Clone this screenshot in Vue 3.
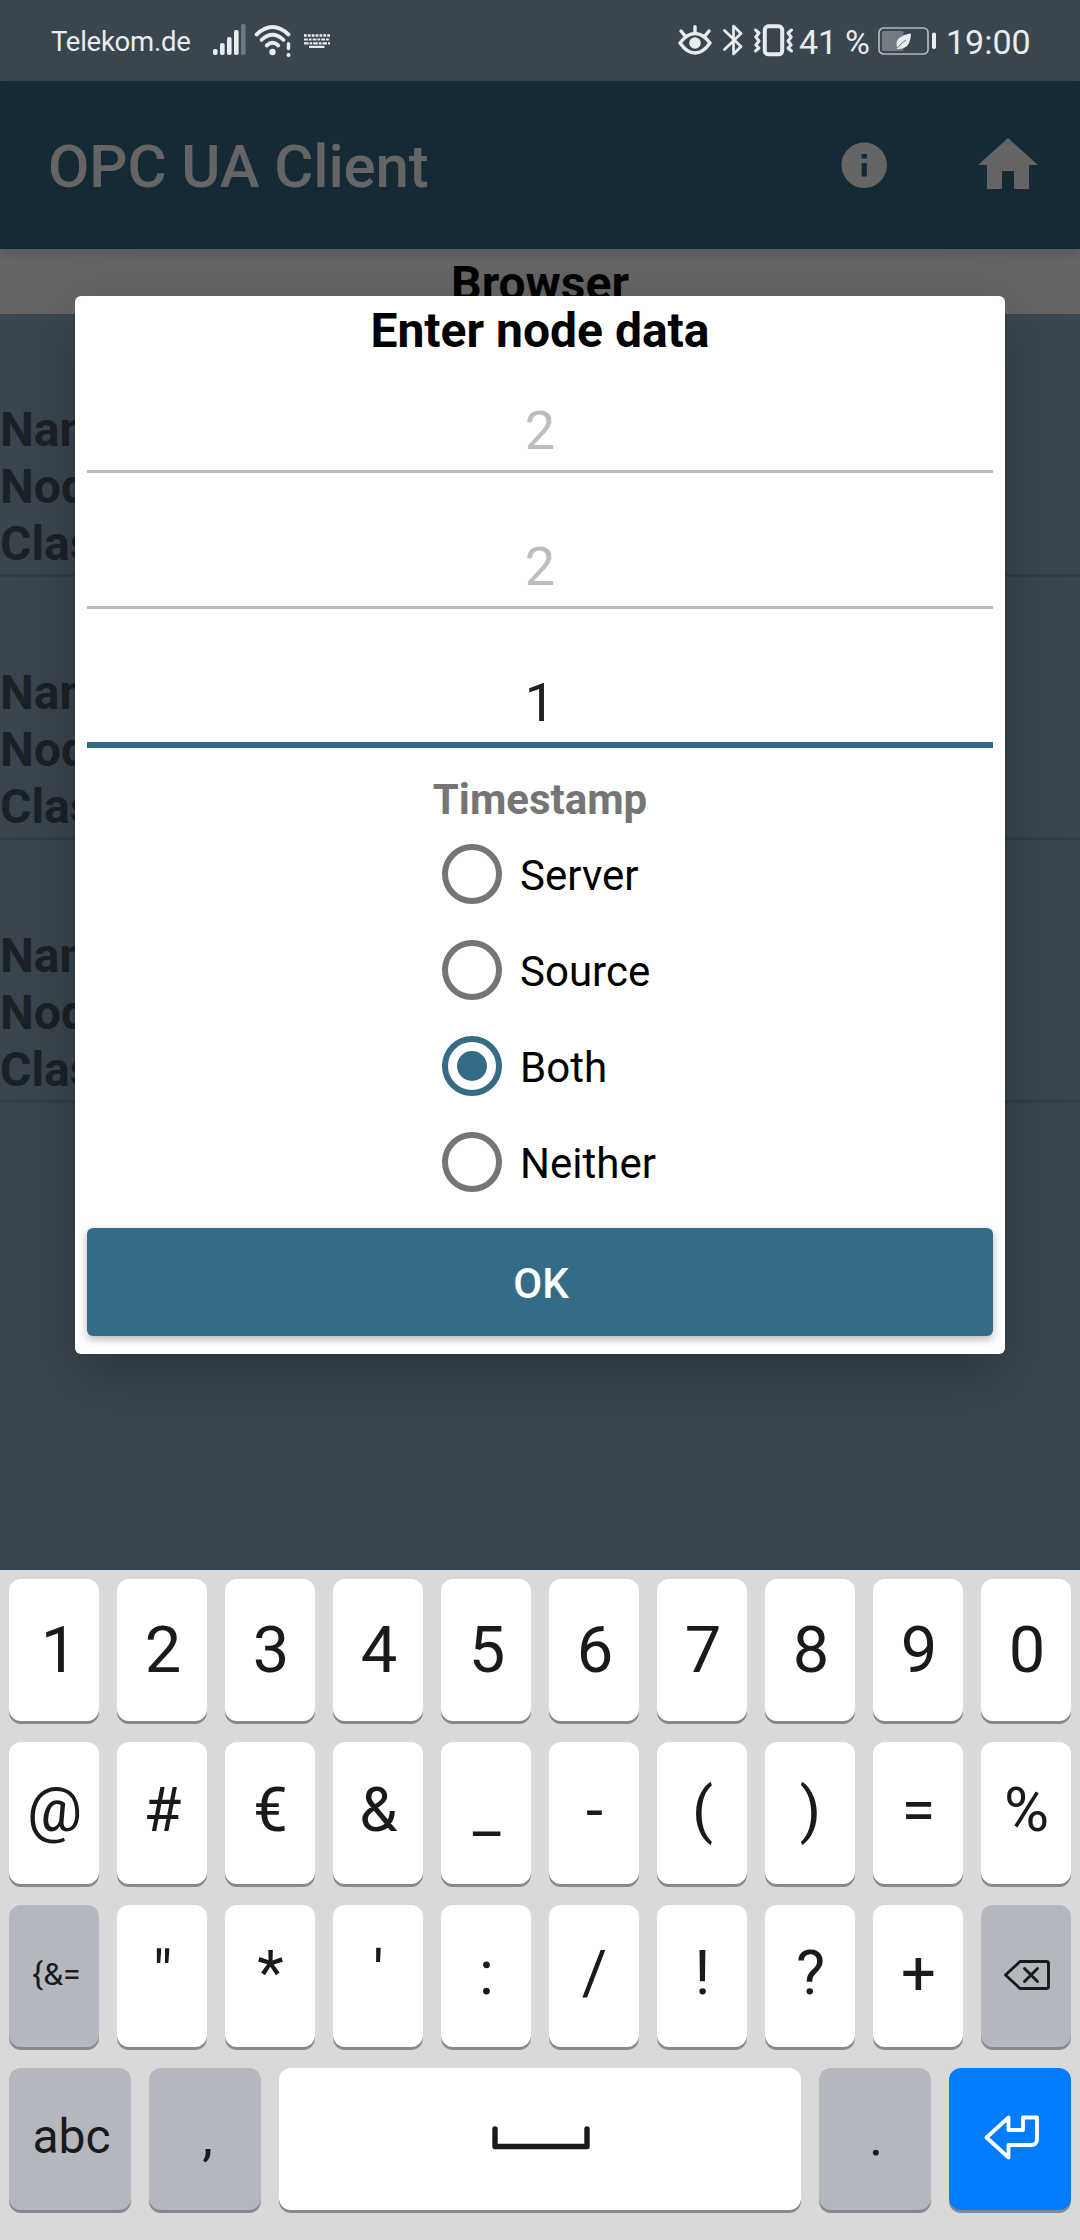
<script setup>
import { ref } from 'vue'

const items = [1, 2, 3]
const fields = [
  { value: '2', state: 'hint' },
  { value: '2', state: 'hint' },
  { value: '1', state: 'focused' },
]
const options = ['Server', 'Source', 'Both', 'Neither']
const selected = ref('Both')
const signal = [6, 12, 18, 25, 31]

const digits = '1234567890'.split('')
const symbols = '@#€&_-()=%'.split('')
const marks = ['"', '*', "'", ':', '/', '!', '?', '+']
</script>

<template>
  <div class="screen">
    <header class="status">
      <span class="carrier">Telekom.de</span>
      <svg class="signal" width="34" height="32" viewBox="0 0 34 32">
        <rect
          v-for="(h, i) in signal"
          :key="i"
          :x="i * 7"
          :y="31 - h"
          width="4.6"
          :height="h"
          rx="1.8"
          fill="#e9ebec"
          :opacity="i === 4 ? 0.3 : 1"
        />
      </svg>
      <svg class="wifi" width="38" height="34" viewBox="0 0 38 34" fill="none" stroke="#e9ebec" stroke-width="3.8" stroke-linecap="round">
        <path d="M2.5 10.5Q18.5 -4.5 34.5 10.5" />
        <path d="M7.5 16Q18.5 5.5 29.5 16" />
        <path d="M12.7 21.5Q18.5 16 24.3 21.5" />
        <circle cx="18.5" cy="28" r="3.2" fill="#e9ebec" stroke="none" />
        <path d="M34.5 19.7V24.5" stroke-width="3.4" />
        <circle cx="34.5" cy="31" r="2" fill="#e9ebec" stroke="none" />
      </svg>
      <svg class="keys-icon" width="26" height="14" viewBox="0 0 26 14" stroke="#e9ebec" fill="none">
        <path d="M0 1.5H26" stroke-width="2.6" stroke-dasharray="2.8 1.07" />
        <path d="M0 5.5H26" stroke-width="2.2" stroke-dasharray="3.9 0.9 2.8 1" />
        <path d="M0 9.3H26" stroke-width="2.2" stroke-dasharray="4.6 1 2.6 1" />
        <path d="M5 12.9H20.5" stroke-width="2.2" />
      </svg>

      <svg class="eye" width="34" height="31" viewBox="0 0 34 31" fill="none" stroke="#e9ebec" stroke-width="3.4" stroke-linecap="round" stroke-linejoin="round">
        <path d="M2 18Q9 8.5 17 8.5T32 18Q25 28 17 28T2 18Z" />
        <circle cx="17" cy="18" r="5.8" fill="#e9ebec" stroke="none" />
        <path d="M17 1.8V8M3 6L7 11M31 6L27 11" />
      </svg>
      <svg class="bluetooth" width="20" height="32" viewBox="0 0 20 32" fill="none" stroke="#e9ebec" stroke-width="2.7" stroke-linejoin="round" stroke-linecap="round">
        <path d="M1.5 6.5L18 22.5L10.5 30V2L18 9.5L1.5 25.5" />
      </svg>
      <svg class="vibrate" width="41" height="33" viewBox="0 0 41 33" fill="none" stroke="#e9ebec" stroke-linejoin="round" stroke-linecap="round">
        <rect x="11.8" y="2.3" width="17.4" height="28" rx="3.5" stroke-width="4" />
        <path d="M2.5 6L6 9L2.8 13L6 17L2.8 21L6 24L2.5 27" stroke-width="3" />
        <path d="M38.5 6L35 9L38.2 13L35 17L38.2 21L35 24L38.5 27" stroke-width="3" />
      </svg>
      <span class="percent">41 %</span>
      <svg class="battery" width="59" height="28" viewBox="0 0 59 28">
        <rect x="1" y="1" width="49" height="26" rx="4.5" fill="none" stroke="#b4b9bd" stroke-width="1.7" />
        <rect x="4" y="4" width="21.5" height="20" rx="1.5" fill="#747b82" />
        <path d="M33 6.5C25 8 18.5 10.5 18.5 17Q18.5 19 19.5 20.5L18.5 22H20.5C29 22 32.5 17 33 6.5Z" fill="#e9ebec" />
        <path d="M19.5 21Q23 16 28 13" fill="none" stroke="#747b82" stroke-width="1" />
        <rect x="54" y="5.5" width="4" height="16.5" rx="1.8" fill="#e9ebec" />
      </svg>
      <span class="clock">19:00</span>
    </header>

    <nav class="appbar">
      <h1>OPC UA Client</h1>
      <svg class="info" width="54.5" height="54.5" viewBox="0 0 24 24" fill="#656565">
        <path d="M12 2C6.48 2 2 6.48 2 12s4.48 10 10 10 10-4.48 10-10S17.52 2 12 2zm1.15 15h-2.3v-6h2.3v6zm0-8h-2.3V7h2.3v2z" />
      </svg>
      <svg class="home" width="72" height="72" viewBox="0 0 24 24" fill="#656565">
        <path d="M10 20v-6h4v6h5v-8h3L12 3 2 12h3v8z" />
      </svg>
    </nav>

    <h2 class="section">Browser</h2>

    <ul class="list">
      <li v-for="n in items" :key="n">
        <div>Name</div>
        <div>Node</div>
        <div>Class</div>
      </li>
    </ul>

    <section class="keyboard">
      <div class="row digits">
        <div v-for="k in digits" :key="k" class="key">{{ k }}</div>
      </div>
      <div class="row">
        <div v-for="k in symbols" :key="k" class="key">{{ k }}</div>
      </div>
      <div class="row">
        <div class="key grey more">{&amp;=</div>
        <div v-for="k in marks" :key="k" class="key">{{ k }}</div>
        <div class="key grey">
          <svg width="48" height="32" viewBox="0 0 48 32" fill="none" stroke="#1a1a1a" stroke-width="2.9" stroke-linejoin="round" stroke-linecap="round">
            <path d="M17 2.5H43.5Q45.5 2.5 45.5 4.5V27.500Q45.5 29.5 43.5 29.5H17L2.5 16Z" />
            <path d="M21.5 9.5L34.5 22.5M34.5 9.5L21.5 22.5" />
          </svg>
        </div>
      </div>
      <div class="row">
        <div class="key grey abc">abc</div>
        <div class="key grey punct comma">,</div>
        <div class="key space">
          <svg width="98" height="24" viewBox="0 0 98 24" fill="none" stroke="#1a1a1a" stroke-width="5.4" stroke-linecap="round" stroke-linejoin="round">
            <path d="M3 3V20.5H95V3" />
          </svg>
        </div>
        <div class="key grey punct">.</div>
        <div class="key enter">
          <svg width="56" height="45" viewBox="0 0 56 45" fill="none" stroke="#fff" stroke-width="3.8" stroke-linejoin="round">
            <path d="M2.5 22.5L24.5 2.5V15H39V2.5H53V24Q53 30 47 30H24.5V42.5Z" />
          </svg>
        </div>
      </div>
    </section>

    <section class="dialog">
      <h2>Enter node data</h2>
      <div v-for="(f, i) in fields" :key="i" class="field" :class="f.state">{{ f.value }}</div>
      <h3>Timestamp</h3>
      <div class="options">
        <div v-for="o in options" :key="o" class="option" :class="{ on: o === selected }" @click="selected = o">
          <i class="radio"></i>
          <span>{{ o }}</span>
        </div>
      </div>
      <div class="ok">OK</div>
    </section>
  </div>
</template>

<style>
body {
  margin: 0;
}
</style>

<style scoped>
.screen {
  position: relative;
  display: flex;
  flex-direction: column;
  width: 1080px;
  height: 2240px;
  overflow: hidden;
  background: #3a464f;
  font-family: Roboto, "Liberation Sans", sans-serif;
}
h1, h2, h3, ul {
  margin: 0;
  padding: 0;
}

/* status bar */
.status {
  display: flex;
  align-items: center;
  flex: none;
  box-sizing: border-box;
  height: 81px;
  color: #e9ebec;
  white-space: nowrap;
}
.status > * {
  flex: none;
}
.carrier {
  width: 162px;
  margin-left: 51px;
  padding-top: 2px;
  font-size: 27.5px;
  letter-spacing: -0.25px;
}
.signal { margin-top: -1px; }
.wifi { margin-left: 7px; }
.keys-icon { margin-left: 12px; }
.eye { margin-left: 348px; }
.bluetooth { margin-left: 11px; margin-top: -1px; }
.vibrate { margin-left: 10px; }
.percent {
  width: 79px;
  margin-left: 5px;
  padding-top: 2px;
  font-size: 34px;
  letter-spacing: -0.2px;
}
.clock {
  margin-left: 9px;
  padding-top: 2px;
  font-size: 34px;
}

/* app bar */
.appbar {
  display: flex;
  align-items: center;
  flex: none;
  height: 168px;
  background: #152a34;
  box-shadow: 0 2px 12px rgba(0, 0, 0, 0.18);
  z-index: 1;
}
.appbar h1 {
  flex: 1;
  padding: 3px 0 0 48px;
  color: #656565;
  font-size: 60px;
  font-weight: 500;
  letter-spacing: -0.12px;
}
.home { margin: 0 36px 0 81px; }

.section {
  flex: none;
  box-sizing: border-box;
  height: 65px;
  padding-top: 2px;
  background: #656565;
  color: #000;
  font-size: 48px;
  line-height: 65px;
  text-align: center;
}

.list {
  flex: 1;
  list-style: none;
  color: #1b2126;
  font-size: 48px;
  font-weight: 700;
  line-height: 57px;
}
.list li {
  padding: 87px 0 2px;
  border-bottom: 3px solid #323d45;
}

/* dialog */
.dialog {
  position: absolute;
  z-index: 2;
  left: 75px;
  top: 296px;
  box-sizing: border-box;
  width: 930px;
  height: 1058px;
  padding: 7px 12px 18px;
  border-radius: 6px;
  background: #fff;
  box-shadow: 0 22px 60px rgba(0, 0, 0, 0.26);
}
.dialog h2 {
  height: 62px;
  color: #000;
  font-size: 48px;
  line-height: 56px;
  text-align: center;
}
.field {
  padding: 34px 0 8px;
  border-bottom: 3px solid #bababa;
  color: #bdbdbd;
  font-size: 54px;
  line-height: 63px;
  text-align: center;
}
.field + .field {
  margin-top: 28px;
}
.field.focused {
  border-bottom: 6px solid #346b86;
  color: #212121;
}
.dialog h3 {
  margin: 27px 0 1px;
  color: #757575;
  font-size: 42px;
  line-height: 50px;
  text-align: center;
}
.options {
  width: fit-content;
  margin: 0 auto;
  padding-left: 18px;
}
.option {
  display: flex;
  align-items: center;
  gap: 18px;
  height: 96px;
  color: #000;
  font-size: 42px;
}
.option span {
  padding-top: 3px;
}
.radio {
  display: flex;
  align-items: center;
  justify-content: center;
  box-sizing: border-box;
  width: 60px;
  height: 60px;
  border: 6px solid #757575;
  border-radius: 50%;
}
.on .radio {
  border-color: #346b86;
}
.on .radio::after {
  content: "";
  width: 30px;
  height: 30px;
  border-radius: 50%;
  background: #346b86;
}
.ok {
  box-sizing: border-box;
  height: 108px;
  margin-top: 18px;
  padding: 2px 0 0 2px;
  border-radius: 6px;
  background: #346b86;
  box-shadow: 0 3px 8px rgba(0, 0, 0, 0.3);
  color: #fff;
  font-size: 42px;
  font-weight: 500;
  line-height: 108px;
  text-align: center;
}

/* keyboard */
.keyboard {
  display: flex;
  flex-direction: column;
  gap: 21px;
  flex: none;
  box-sizing: border-box;
  height: 670px;
  padding: 9px;
  background: #d9d9d9;
}
.row {
  display: flex;
  gap: 18px;
  height: 142px;
}
.key {
  display: flex;
  align-items: center;
  justify-content: center;
  flex: none;
  box-sizing: border-box;
  width: 90px;
  height: 142px;
  padding: 0 0 6px 1px;
  border-radius: 12px;
  background: #fff;
  box-shadow: 0 3px 0 #88898e;
  color: #1a1a1a;
  font-size: 61.5px;
}
.digits .key {
  padding: 0 0 0 2px;
  font-size: 65px;
}
.digits .key:first-child {
  padding-left: 10px;
}
.grey {
  background: #b4b8be;
}
.key svg {
  margin: 4px 0 0 1px;
}
.key.more {
  padding: 0 0 4px 5px;
  font-size: 32px;
}
.key.abc {
  width: 122px;
  padding: 0 0 5px 3px;
  font-size: 48px;
}
.key.punct {
  width: 112px;
  padding: 0 0 5px 2px;
  font-size: 54px;
}
.key.comma {
  padding-left: 5px;
}
.key.space {
  width: 522px;
  padding-left: 0;
}
.key.enter {
  width: 122px;
  padding-left: 2px;
  background: #007dff;
}
.enter svg {
  margin-top: 3px;
}
</style>
